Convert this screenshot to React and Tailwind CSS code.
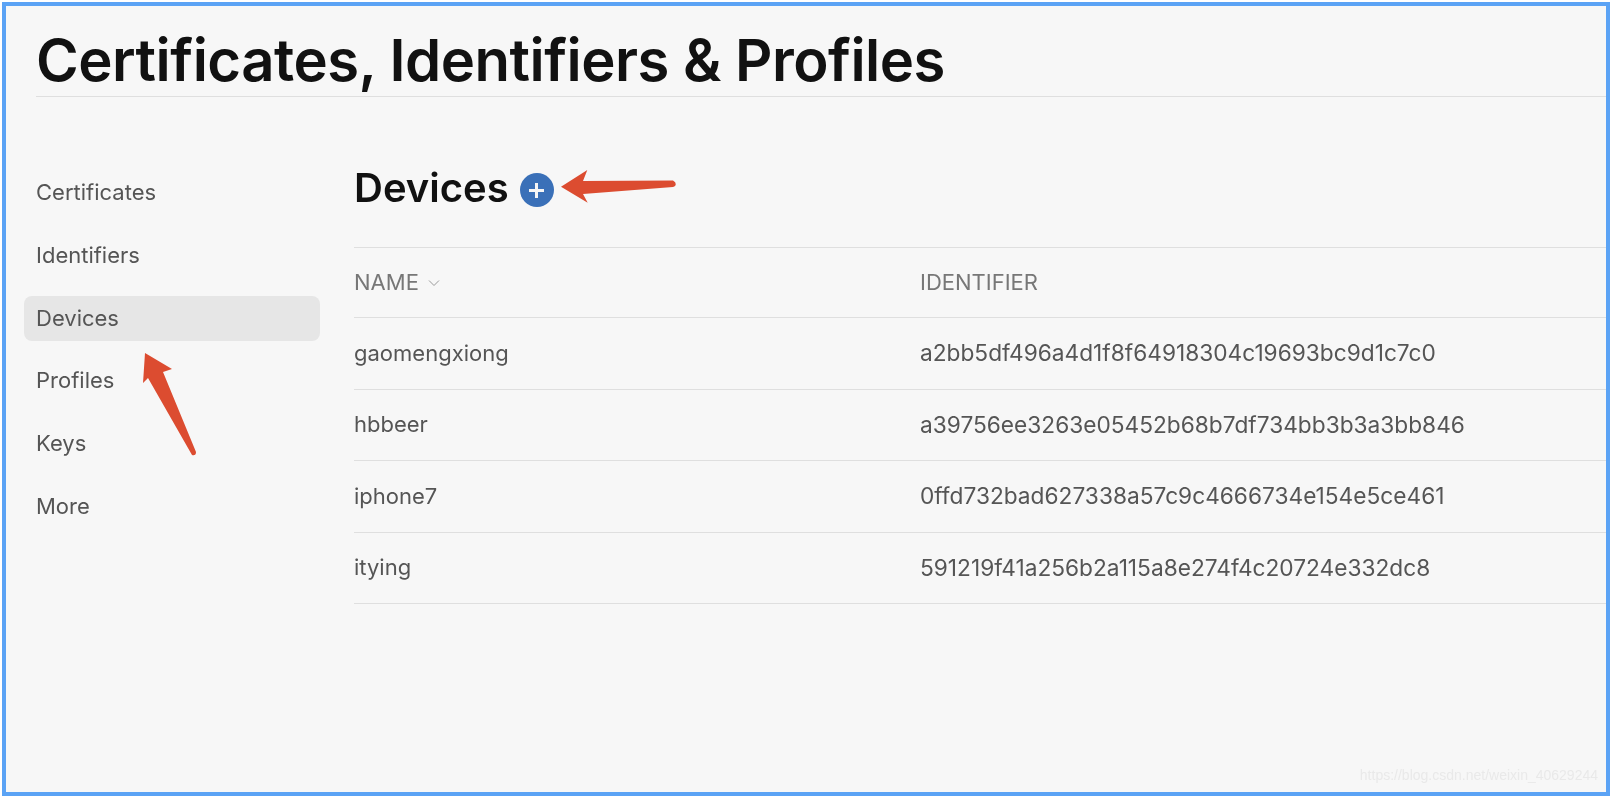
const navItems = ["Certificates", "Identifiers", "Devices", "Profiles", "Keys", "More"];

const devices = [
  { name: "gaomengxiong", id: "a2bb5df496a4d1f8f64918304c19693bc9d1c7c0" },
  { name: "hbbeer", id: "a39756ee3263e05452b68b7df734bb3b3a3bb846" },
  { name: "iphone7", id: "0ffd732bad627338a57c9c4666734e154e5ce461" },
  { name: "itying", id: "591219f41a256b2a115a8e274f4c20724e332dc8" },
];

const App = () => {
  return (
    <div className="h-[798px] w-[1612px] overflow-hidden bg-white p-[2px] font-['Inter',sans-serif]">
      <div className="h-full w-full border-[4px] border-[#5ba3f5] bg-[#f7f7f7]">
        {/* the reference is an upscaled photo, so everything inside the frame is a bit soft */}
        <div className="relative h-full w-full pl-[30px] blur-[0.5px]">
          <div className="flex h-[91px] items-end border-b border-[#dfdfdf]">
            <h1 className="pb-[6px] text-[58px] leading-[60px] font-semibold tracking-[-0.5px] whitespace-nowrap text-[#111111]">
              Certificates, Identifiers &amp; Profiles
            </h1>
          </div>

          <div className="flex">
            <nav className="mt-[73px] -ml-[12px] flex w-[296px] shrink-0 flex-col gap-[17.8px]">
              {navItems.map((item) => (
                <div
                  key={item}
                  className={`flex h-[45px] items-center rounded-lg pl-[12px] text-[22px] text-[#555555] ${
                    item === "Devices" ? "bg-[#e6e6e6]" : ""
                  }`}
                >
                  {item}
                </div>
              ))}
            </nav>

            <main className="ml-[34px] flex-1">
              <div className="mt-[59px] mb-[27px] flex h-[64px] items-center gap-[11px]">
                <h2 className="text-[40px] font-semibold text-[#111111]">Devices</h2>
                <div className="mt-[4px] flex h-[34px] w-[34px] items-center justify-center rounded-full bg-[#3a70b8]">
                  <svg width="17" height="17" viewBox="0 0 17 17">
                    <path d="M8.5 1v15M1 8.5h15" stroke="#f5f5f5" strokeWidth="3" />
                  </svg>
                </div>
              </div>

              <div className="flex h-[71px] items-center border-t border-b border-[#dfdfdf] text-[22px] text-[#777777]">
                <div className="flex w-[566px] items-center gap-[9px]">
                  NAME
                  <svg width="12" height="8" viewBox="0 0 12 8" fill="none">
                    <path d="M1 1.5l5 5 5-5" stroke="#999999" strokeWidth="1" />
                  </svg>
                </div>
                <div>IDENTIFIER</div>
              </div>

              {devices.map((device) => (
                <div
                  key={device.name}
                  className="flex h-[71.5px] items-center border-b border-[#dfdfdf] text-[22px] text-[#555555]"
                >
                  <div className="w-[566px]">{device.name}</div>
                  <div className="text-[22.7px]">{device.id}</div>
                </div>
              ))}
            </main>
          </div>

          <svg className="absolute top-[340px] left-[130px]" width="64" height="114" viewBox="0 0 64 114">
            <path d="M9 7L36 23L27 26L60 106Q60 110 56 109L12 32L7 37Z" fill="#dc4c30" />
          </svg>
          <svg className="absolute top-[160px] left-[550px]" width="124" height="40" viewBox="0 0 124 40">
            <path d="M5 20.7L31.3 4L27 15L117 14.5Q120 16 119.7 18Q120 20 117 21L27 28L31.7 36.7Z" fill="#dc4c30" />
          </svg>

          <div className="absolute right-[8px] bottom-[7px] font-['Liberation_Sans',sans-serif] text-sm text-[#e9e9e9]">
            https://blog.csdn.net/weixin_40629244
          </div>
        </div>
      </div>
    </div>
  );
};

export default App;
